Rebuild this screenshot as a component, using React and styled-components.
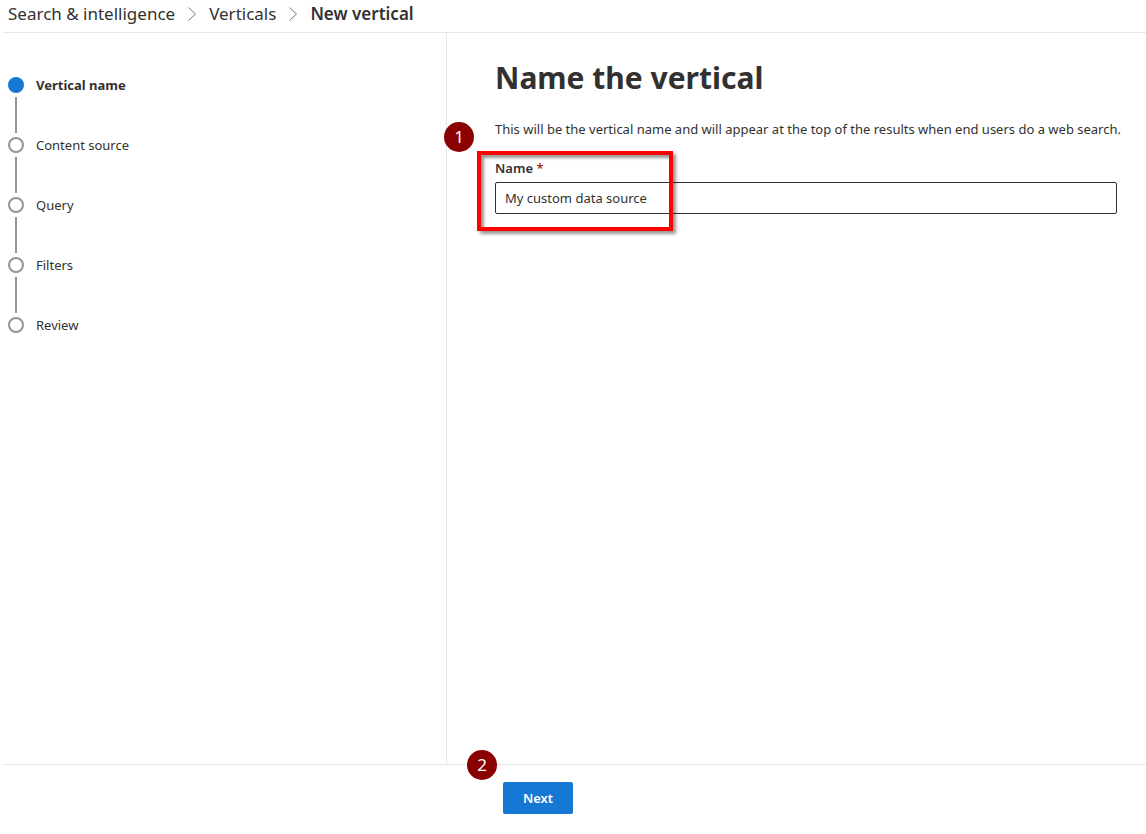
import React, { useState } from "react";
import styled, { createGlobalStyle } from "styled-components";

const GlobalStyle = createGlobalStyle`
  *, *::before, *::after { box-sizing: border-box; }
  body {
    margin: 0;
    background: #fff;
    color: #323130;
    font-family: "Segoe UI", "Noto Sans", "Open Sans", sans-serif;
    font-size: 13px;
    line-height: 20px;
  }
`;

const Page = styled.div`
  display: flex;
  flex-direction: column;
  min-height: 100vh;
  padding-left: 3px;
`;

const Breadcrumb = styled.nav`
  border-bottom: 1px solid #e6e6e6;
  padding: 2px 5px 6px;
`;

const Crumbs = styled.ol`
  display: flex;
  align-items: center;
  margin: 0;
  padding: 0;
  list-style: none;
  font-size: 17px;
  line-height: 24px;
`;

const Crumb = styled.li`
  display: flex;
  align-items: center;
  font-weight: ${(p) => (p.$current ? 600 : 400)};
`;

const CrumbLink = styled.a`
  color: inherit;
  text-decoration: none;
`;

const Chevron = styled.svg`
  width: 10px;
  height: 16px;
  margin: 0 12px;
  fill: none;
  stroke: #7a7876;
`;

const Body = styled.div`
  flex: 1;
  display: flex;
`;

const Sidebar = styled.aside`
  flex: 0 0 444px;
  border-right: 1px solid #e6e6e6;
  padding: 42px 5px;
`;

const Steps = styled.ol`
  margin: 0;
  padding: 0;
  list-style: none;
`;

const Step = styled.li`
  display: grid;
  grid-template-columns: 16px 1fr;
  column-gap: 12px;
  row-gap: 2px;
  align-items: center;
  padding-bottom: 2px;
  font-weight: ${(p) => (p.$current ? 700 : 400)};
`;

const StepDot = styled.span`
  width: 16px;
  height: 16px;
  border: 2px solid ${(p) => (p.$current ? "#1578d4" : "#979593")};
  border-radius: 50%;
  background: ${(p) => (p.$current ? "#1578d4" : "#fff")};
`;

const StepLine = styled.span`
  justify-self: center;
  width: 2px;
  height: 36px;
  background: #979593;
`;

const Main = styled.main`
  position: relative;
  flex: 1;
  padding: 24px 16px 24px 48px;
`;

const Title = styled.h1`
  margin: 0;
  font-size: 30px;
  line-height: 42px;
  font-weight: 700;
`;

const Intro = styled.p`
  margin: 20px 0 19px;
`;

const Field = styled.div`
  position: relative;
  display: flex;
  flex-direction: column;
  gap: 4px;
  margin-right: 13px;
`;

const FieldLabel = styled.label`
  font-weight: 600;
`;

const Required = styled.span`
  color: #a4262c;
`;

const TextInput = styled.input`
  width: 100%;
  height: 32px;
  border: 1px solid #323130;
  border-radius: 2px;
  padding: 0 9px;
  background: #fff;
  color: inherit;
  font: inherit;
`;

const Highlight = styled.span`
  position: absolute;
  left: -18px;
  top: -7px;
  width: 196px;
  height: 80px;
  border: 4px solid #f00;
  box-shadow: 3px 3px 3px rgba(0, 0, 0, 0.4), inset 3px 3px 3px rgba(0, 0, 0, 0.4);
  pointer-events: none;
`;

const Badge = styled.span`
  position: absolute;
  left: ${(p) => p.$left}px;
  top: ${(p) => p.$top}px;
  width: 30px;
  height: 30px;
  border-radius: 50%;
  background: #8b0000;
  color: #fff;
  font-size: 17px;
  line-height: 30px;
  text-align: center;
`;

const Footer = styled.footer`
  position: relative;
  border-top: 1px solid #e6e6e6;
  padding: 17px 16px 20px 500px;
`;

const PrimaryButton = styled.button`
  display: block;
  height: 32px;
  min-width: 70px;
  border: 0;
  border-radius: 2px;
  background: #1578d4;
  color: #fff;
  font: inherit;
  font-weight: 600;
`;

const steps = ["Vertical name", "Content source", "Query", "Filters", "Review"];

function Separator() {
  return (
    <Chevron viewBox="0 0 10 16" aria-hidden="true">
      <path d="M1.5 1.5 8.5 8l-7 6.5" />
    </Chevron>
  );
}

export default function App() {
  const [name, setName] = useState("My custom data source");
  return (
    <Page>
      <GlobalStyle />
      <Breadcrumb aria-label="Breadcrumb">
        <Crumbs>
          <Crumb>
            <CrumbLink href="#search">Search &amp; intelligence</CrumbLink>
            <Separator />
          </Crumb>
          <Crumb>
            <CrumbLink href="#verticals">Verticals</CrumbLink>
            <Separator />
          </Crumb>
          <Crumb $current aria-current="page">New vertical</Crumb>
        </Crumbs>
      </Breadcrumb>
      <Body>
        <Sidebar>
          <Steps>
            {steps.map((step, i) => (
              <Step key={step} $current={i === 0}>
                <StepDot $current={i === 0} />
                <span>{step}</span>
                {i < steps.length - 1 && <StepLine />}
              </Step>
            ))}
          </Steps>
        </Sidebar>
        <Main>
          <Title>Name the vertical</Title>
          <Intro>
            This will be the vertical name and will appear at the top of the results when end users do a web search.
          </Intro>
          <Field>
            <FieldLabel htmlFor="vertical-name">
              Name <Required>*</Required>
            </FieldLabel>
            <TextInput
              id="vertical-name"
              required
              value={name}
              onChange={(e) => setName(e.target.value)}
            />
            <Highlight />
          </Field>
          <Badge $left={-3} $top={89}>1</Badge>
        </Main>
      </Body>
      <Footer>
        <Badge $left={464} $top={-15}>2</Badge>
        <PrimaryButton type="button">Next</PrimaryButton>
      </Footer>
    </Page>
  );
}
